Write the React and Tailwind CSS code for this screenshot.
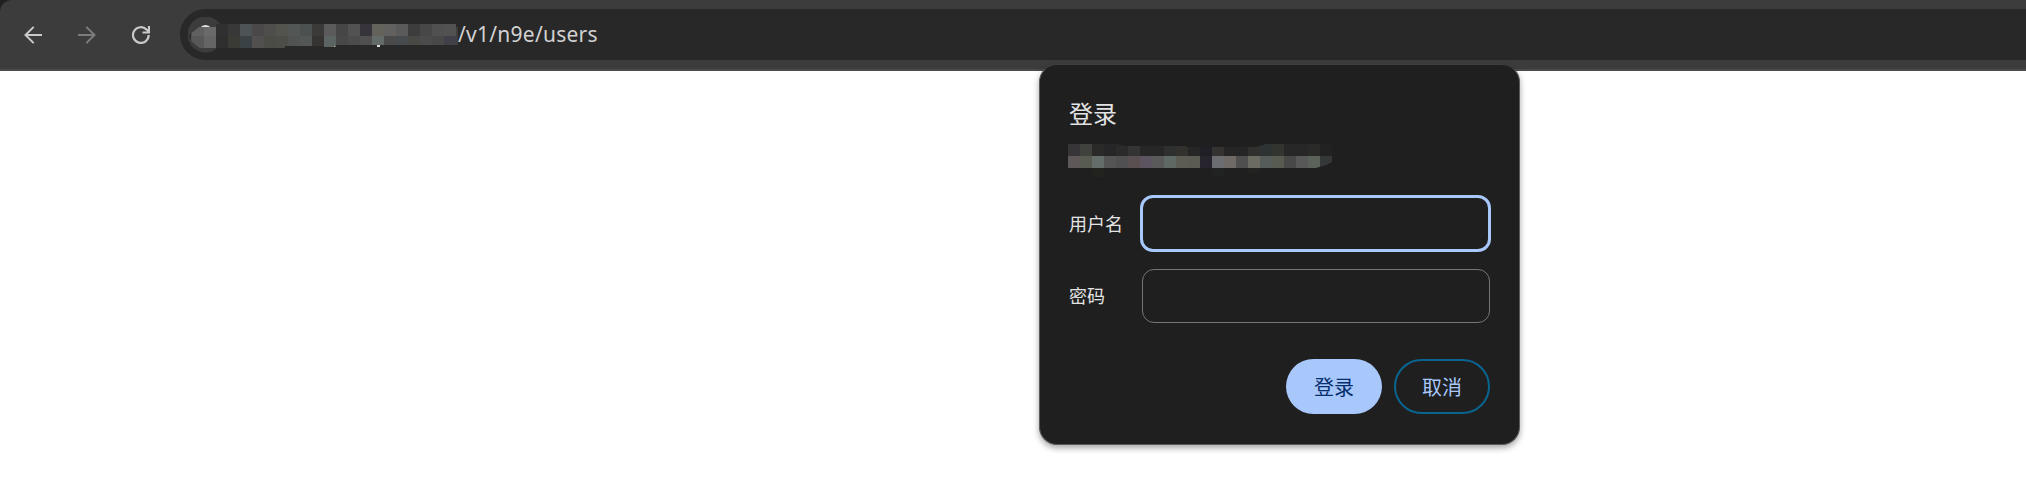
import React from "react";

const CELL = 12;

const ADDRESS_ROWS = [
  ["#303030", "#383838", "#4e5456", "#4b4849", "#4f4e4c", "#54544e", "#525655", "#4b5051", "#3b3a39", "#5b5b5c", "#464646", "#525252", "#37343c", "#63635b", "#636060", "#5a5a5b", "#3c3d3c", "#474747", "#505050", "#525252"],
  ["#2f2f2f", "#3b3b36", "#3a4245", "#524f4f", "#4b4c45", "#4d4d48", "#505352", "#525655", "#353433", "#5b6363", "#484848", "#4c4c4c", "#505050", "#636b68", "#4a4a4a", "#484b4d", "#484845", "#4b4b4b", "#484848", "#413f47"],
];

const HOST_ROWS = [
  ["#383538", "#3f423d", "#2a2a28", "#262628", "#2a2a2a", "#343434", "#272727", "#272727", "#2d302e", "#32312e", "#262626", "#211f26", "#353331", "#262626", "#252525", "#30302e", "#2d3333", "#32342f", "#272727", "#272727", "#2a2b28", "#222222"],
  ["#5e5859", "#585b52", "#646d69", "#555555", "#505052", "#5a5052", "#5c5560", "#5a5a5a", "#5f6963", "#5c5c54", "#5b5b53", "#27242e", "#6c6d70", "#6f6a65", "#4f4f4f", "#6b6b61", "#555c5a", "#585c50", "#484848", "#585858", "#5a6259", "#353838"],
];

function Cells({ rows, x = 0, y = 0 }) {
  return rows.map((row, r) =>
    row.map((fill, c) => (
      <rect key={`${r}-${c}`} x={x + c * CELL} y={y + r * CELL} width={CELL} height={CELL} fill={fill} />
    ))
  );
}

function AddressMosaic() {
  return (
    <svg width="270" height="36" viewBox="0 0 270 36" className="ml-2 shrink-0" shapeRendering="crispEdges" aria-hidden="true">
      <defs>
        <clipPath id="address-shape">
          <path d="M28 7H268V28H148V29H97V31H28Z" />
        </clipPath>
      </defs>
      <g shapeRendering="auto">
        <circle cx="17.5" cy="17.5" r="18" fill="#3c3c3c" />
        <path d="M11.5 11Q17.500 5 23.500 11Z" fill="#e3e3e3" />
        <path d="M0.500 19.500L3.500 16V23Z" fill="#2b2b2b" />
        <path d="M28 10L34 8V31H28Z" fill="#303030" />
        <path d="M3.500 16L11 10H28V31H12L3.500 24Z" fill="#606060" />
        <path d="M16 10H28V19H16Z" fill="#6a6a6a" />
        <path d="M16 19H28V31H16Z" fill="#656565" />
        <path d="M3.500 19V24L12 31H16V19Z" fill="#585858" />
      </g>
      <g clipPath="url(#address-shape)">
        <Cells rows={ADDRESS_ROWS} x={28} y={7} />
      </g>
      <path d="M136 28H148V30H136Z" fill="#5b6363" />
      <path d="M146 29H147V30H146Z" fill="#d0c8a0" />
      <path d="M189 28H192V30H189Z" fill="#dddddd" />
      <path d="M268 10H270V28H268Z" fill="#3f3f3f" />
    </svg>
  );
}

function HostMosaic() {
  return (
    <svg width="264" height="34" viewBox="0 0 264 34" className="-ml-px shrink-0" aria-hidden="true">
      <defs>
        <clipPath id="host-shape">
          <path d="M0 0H48L58 2H118V3H188L198 0H264V18L258 21L248 24H0Z" />
        </clipPath>
      </defs>
      <g clipPath="url(#host-shape)" shapeRendering="crispEdges">
        <Cells rows={HOST_ROWS} />
      </g>
      <rect x="24" y="24" width="12" height="9" fill="#22231f" />
      <rect x="144" y="24" width="12" height="8" fill="#202321" />
      <rect x="180" y="24" width="12" height="5" fill="#222220" />
    </svg>
  );
}

function Toolbar() {
  return (
    <header className="flex h-[71px] items-start overflow-hidden rounded-tl-[12px] border-b-2 border-[#4a4a4a] bg-[#3c3c3c] pt-[9px]">
      <nav className="flex h-[51px] w-[180px] shrink-0 items-center pl-6">
        <button className="flex" aria-label="后退">
          <svg width="18" height="18" viewBox="0 0 18 18" fill="none" stroke="#c9c9c9" strokeWidth="2">
            <path d="M18 9H1.500M9.700 0.900L1.500 9L9.700 17.100" />
          </svg>
        </button>
        <button className="ml-9 flex" aria-label="前进">
          <svg width="18" height="18" viewBox="0 0 18 18" fill="none" stroke="#7c7c7c" strokeWidth="2">
            <path d="M0 9H16.500M8.300 0.900L16.500 9L8.300 17.100" />
          </svg>
        </button>
        <button className="ml-9 flex" aria-label="刷新">
          <svg width="18" height="18" viewBox="0 0 18 18" fill="none" stroke="#c9c9c9" strokeWidth="2.200">
            <path d="M16.700 9A7.850 7.850 0 1 1 14.500 3.600L17 6.200" />
            <path d="M17 0V6.500H10.500" />
          </svg>
        </button>
      </nav>
      <div className="-mr-8 flex h-[51px] flex-1 items-center rounded-full bg-[#282828]">
        <AddressMosaic />
        <span className="whitespace-nowrap pb-px font-['Noto_Sans',sans-serif] text-[21px] leading-[30px] tracking-[0.25px] text-[#d2d2d2]">
          /v1/n9e/users
        </span>
      </div>
    </header>
  );
}

function LoginDialog() {
  return (
    <form
      onSubmit={(e) => e.preventDefault()}
      className="absolute left-[1039px] top-16 flex h-[381px] w-[481px] flex-col rounded-[18px] border border-[#5a5a5a] border-t-[#3f3f3f] bg-[#1f1f1f] pl-[29px] pr-[29px] pt-8 font-['Noto_Sans_CJK_SC',sans-serif] text-[#e3e3e3] shadow-[0_3px_6px_rgba(0,0,0,0.35)]"
    >
      <h1 className="h-[47px] text-[24px] leading-[31px]">登录</h1>
      <HostMosaic />
      <div className="mt-[17px] flex h-[57px] items-center">
        <label htmlFor="username" className="w-[71px] shrink-0 pb-0.5 text-[18px] leading-6">用户名</label>
        <input id="username" className="h-[57px] w-[351px] shrink-0 rounded-[13px] border-[3px] border-[#a8c7fa] bg-transparent outline-none" />
      </div>
      <div className="mt-[17px] flex h-[54px] items-center">
        <label htmlFor="password" className="w-[73px] shrink-0 pb-0.5 text-[18px] leading-6">密码</label>
        <input id="password" type="password" className="h-[54px] w-[348px] shrink-0 rounded-[12px] border border-[#757575] bg-transparent outline-none" />
      </div>
      <div className="mt-9 flex justify-end gap-3 text-[20px] leading-7">
        <button className="h-[55px] w-24 rounded-full bg-[#a8c7fa] text-[#062e6f]">登录</button>
        <button type="button" className="h-[55px] w-24 rounded-full border-2 border-[#096590] text-[#a8c7fa]">取消</button>
      </div>
    </form>
  );
}

export default function App() {
  return (
    <div className="relative h-[487px] w-full overflow-hidden bg-white">
      <div className="bg-[linear-gradient(to_right,#1f2022_20px,#fff_20px)]">
        <Toolbar />
      </div>
      <LoginDialog />
    </div>
  );
}
